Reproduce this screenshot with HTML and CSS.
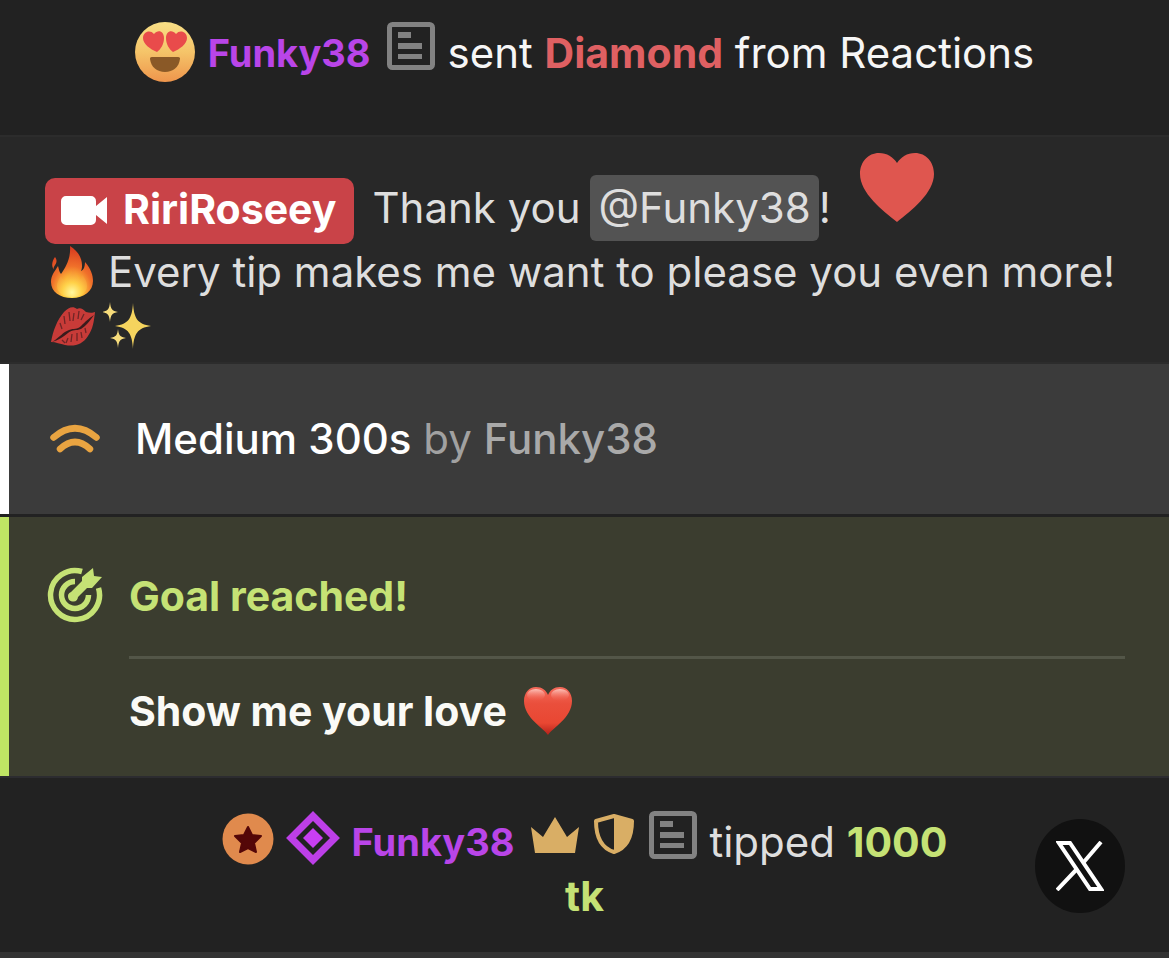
FILE: index.html
```html
<!DOCTYPE html>
<html lang="en">
<head>
<meta charset="utf-8">
<meta name="viewport" content="width=device-width, initial-scale=1">
<title>Chat</title>
<link rel="stylesheet" href="styles.css">
</head>
<body>
<svg class="defs" width="0" height="0" aria-hidden="true">
  <defs>
    <linearGradient id="face" x1="0" y1="0" x2="0" y2="1"><stop offset="0" stop-color="#f8df86"/><stop offset=".5" stop-color="#f5c469"/><stop offset="1" stop-color="#ee954c"/></linearGradient>
    <radialGradient id="flame" cx=".5" cy=".88" r=".85"><stop offset="0" stop-color="#fff36a"/><stop offset=".28" stop-color="#ffc83c"/><stop offset=".58" stop-color="#f0702a"/><stop offset="1" stop-color="#d93a20"/></radialGradient>
    <radialGradient id="core" cx=".5" cy=".85" r=".8"><stop offset="0" stop-color="#fff9a0"/><stop offset=".4" stop-color="#ffd148"/><stop offset="1" stop-color="#f27a2c"/></radialGradient>
    <linearGradient id="love" x1="0" y1="0" x2="0" y2="1"><stop offset="0" stop-color="#f46a5a"/><stop offset=".35" stop-color="#ea4f3c"/><stop offset=".75" stop-color="#e94732"/><stop offset="1" stop-color="#b3211a"/></linearGradient>
    <linearGradient id="shine" x1="0" y1="0" x2="0" y2="1"><stop offset="0" stop-color="#ffd9d2" stop-opacity=".8"/><stop offset="1" stop-color="#f46a5a" stop-opacity="0"/></linearGradient>
    <symbol id="note" viewBox="0 0 48 48"><rect x="2.5" y="2.5" width="43" height="43" rx="3" fill="none" stroke="#828282" stroke-width="5"/><path d="M11 10h13v6H11zM11 21h24v6H11zM11 32h24v5H11z" fill="#828282"/></symbol>
  </defs>
</svg>
<main class="chat">
  <article class="message message-center reaction">
    <div class="line line-top">
      <svg class="emoji-face" viewBox="0 0 60 60" role="img" aria-label="Heart eyes">
        <circle cx="30" cy="30" r="30" fill="url(#face)"/>
        <path d="M22 30C15 27 8 22 8 16c0-6 7-9 11-4 4-5 10-3 10 4 0 6-3 11-7 14z" fill="#e94b4b"/>
        <path d="M38 30c7-3 14-8 14-14 0-6-7-9-11-4-4-5-10-3-10 4 0 6 3 11 7 14z" fill="#e94b4b"/>
        <path d="M17 35h26c2 0 2 1 2 2-1 8-7 13-15 13s-14-5-15-13c0-1 0-2 2-2z" fill="#8a5927"/>
      </svg>
      <span class="user">Funky38</span>
      <svg class="note" aria-hidden="true"><use href="#note"/></svg>
      <span class="light">sent <b class="gift">Diamond</b> from Reactions</span>
    </div>
  </article>

  <article class="message host">
    <div class="line line-host">
      <span class="badge">
        <svg class="camera" viewBox="0 0 46 30" aria-hidden="true"><path d="M5 0h25a5 5 0 0 1 5 5v5l11-9v27l-11-9v5a5 5 0 0 1-5 5H5a5 5 0 0 1-5-5V5a5 5 0 0 1 5-5z" fill="#fff"/></svg>
        RiriRoseey
      </span>
      <span class="said thanks">Thank you</span>
      <span class="said mention">@Funky38</span><span class="said">!</span>
      <svg class="heart-flat" viewBox="0 0 76 70" role="img" aria-label="Heart"><path d="M38 70C24 59 1 41 1 22 1 10 9 1 20 1c8 0 14 4 18 10C42 5 48 1 56 1c11 0 19 9 19 21 0 19-23 37-37 48z" fill="#df564f"/></svg>
    </div>
    <div class="line line-text">
      <svg class="fire" viewBox="0 0 44 52" role="img" aria-label="Fire">
        <path d="M20 0c8 5 12 12 12 19 0 2 0 4-1 6 3-1 4-5 4-9 6 7 8 13 8 19 0 10-9 17-21 17S1 46 1 36c0-7 4-11 7-16 1 3 1 6 3 8 5-7 10-16 9-28zM5 11c2 3 2 5 0 8-1 2-2 3-1 5-3-4-2-9 1-13z" fill="url(#flame)"/>
        <path d="M23 20c0 7 4 10 6 14 2-1 3-3 3-5 4 4 5 8 5 11 0 7-7 11-15 11S7 47 7 40c0-4 2-7 4-10 1 2 2 4 4 5 5-4 8-9 8-15z" fill="url(#core)"/>
      </svg>
      <span>Every tip makes me want to please you even more!</span>
    </div>
    <div class="line line-emoji">
      <svg class="kiss" viewBox="0 0 46 42" role="img" aria-label="Kiss mark">
        <path d="M1 37C3 26 7 15 14 7c5-5 9-6 13-3 3-2 6 0 9 3 3 1 7 1 9 0-1 9-2 17-7 24-5 8-13 11-23 9-5-1-9-3-14-3z" fill="#c83b38"/>
        <path d="M2 37c8-5 11-10 17-12 5-2 8 0 12-4 4-4 7-7 13-11-5 7-8 11-13 14-5 2-8 0-13 4-4 3-9 7-16 9z" fill="#3a1b1c"/>
        <path d="M14 11l1 8M19 7l1 9M24 8l-1 8M29 6l-1 8M34 9l-3 6M10 18l2 6M18 33l-2 5M22 29l-1 8M27 28l0 8M31 27l1 6M35 23l1 5M12 35l3 3" stroke="#702526" stroke-width="1.3" fill="none"/>
      </svg>
      <svg class="sparkles" viewBox="0 0 48 48" role="img" aria-label="Sparkles">
        <path d="M30 1c1 15 4 21 18 23-14 2-17 8-18 23-1-15-4-21-18-23C26 22 29 16 30 1z" fill="#f5d45e"/>
        <path d="M7 0c.7 7 2 9 8 10-6 1-7.300 3-8 10-.7-7-2-9-8-10 6-1 7.300-3 8-10zM15 27c.6 6 2 8 8 9-6 1-7.400 3-8 10-.6-7-2-9-8-10 6-1 7.400-3 8-9z" fill="#f7dc7b"/>
      </svg>
    </div>
  </article>

  <article class="message notice toy">
    <svg class="waves" viewBox="0 0 50 30" fill="none" stroke="#e9a441" stroke-width="6.500" stroke-linecap="round" aria-hidden="true"><path d="M3.500 13.500Q25-5 46.500 13.500M10 25Q25 11 40 25"/></svg>
    <span><span class="level">Medium 300s</span> by <span class="by">Funky38</span></span>
  </article>

  <article class="message notice goal">
    <svg class="target" viewBox="0 0 56 56" aria-hidden="true">
      <g fill="none" stroke="#c5e275" stroke-width="5.500"><path d="M35 4.500A24.500 24.500 0 1 0 51.500 21"/><path d="M28 14.500A13.500 13.500 0 1 0 41.500 28"/></g>
      <path d="M24 25l11-11v-4l11-9 1 8 8 1-10 11h-5L31 30a5 5 0 1 1-7-5z" fill="#c5e275"/>
    </svg>
    <div class="goal-body">
      <h2 class="goal-title">Goal reached!</h2>
      <p class="goal-text">Show me your love
        <svg class="heart-red" viewBox="0 0 50 50" role="img" aria-label="Red heart"><path d="M25 49C21 42 1 32 1 15 1 7 6 1 13 1c6 0 10 3 12 8 2-5 6-8 12-8 7 0 12 6 12 14 0 17-20 27-24 34z" fill="url(#love)"/><ellipse cx="13" cy="9" rx="9" ry="6" fill="url(#shine)"/><ellipse cx="37" cy="9" rx="9" ry="6" fill="url(#shine)"/></svg>
      </p>
    </div>
  </article>

  <article class="message message-center tip">
    <div class="line line-tip">
      <svg class="medal" viewBox="0 0 52 52" aria-hidden="true"><circle cx="26" cy="26" r="25.500" fill="#e08a4d"/><path d="M26 14l4 8 9 1-7 7 2 9-8-4-8 4 2-9-7-7 9-1z" fill="#540708" stroke="#540708" stroke-width="2" stroke-linejoin="round"/></svg>
      <svg class="diamond" viewBox="0 0 54 54" aria-hidden="true"><path d="M27 5l22 22-22 22L5 27z" fill="none" stroke="#bd3fe8" stroke-width="7"/><path d="M27 17l10 10-10 10-10-10z" fill="#c93ff2"/></svg>
      <span class="user">Funky38</span>
      <svg class="crown" viewBox="0 0 48 36" aria-hidden="true"><path d="M0 10l12 10L24 0l12 20 12-10-4 26H4z" fill="#d9ae65"/></svg>
      <svg class="shield" viewBox="0 0 40 40" aria-hidden="true"><path d="M20 2L38 7c0 16-5 27-18 31C7 34 2 23 2 7z" fill="none" stroke="#d9ae65" stroke-width="4" stroke-linejoin="round"/><path d="M20 2l18 5c0 16-5 27-18 31z" fill="#d9ae65"/></svg>
      <svg class="note" aria-hidden="true"><use href="#note"/></svg>
      <span>tipped <b class="amount">1000</b></span>
    </div>
    <b class="amount unit">tk</b>
    <a class="share" href="#x" aria-label="X">
      <svg viewBox="0 0 48 50" fill="none" stroke="#fff" aria-hidden="true"><path d="M3 2h11l31 46H34z" stroke-width="4"/><path d="M45 1L27 22M21 28L1 49" stroke-width="4"/></svg>
    </a>
  </article>
</main>
</body>
</html>
```
FILE: styles.css
```css
* { box-sizing: border-box; }
body { margin: 0; background: #222; color: #dedede; font: 400 42px/54px Inter, "Liberation Sans", sans-serif; }
svg { display: block; flex: none; }
h2, p { margin: 0; font: inherit; }
b, .badge, .goal-title, .goal-text { font-size: 41px; font-weight: 700; }
.defs { position: absolute; }
.message { position: relative; border-bottom: 2px solid #2c2c2c; }
.message-center { display: flex; flex-direction: column; align-items: center; }
.line { display: flex; align-items: center; white-space: nowrap; }
.user { padding-right: 3px; color: #b945e8; font-size: 38px; font-weight: 700; }
.light { color: #f6f6f6; }
.gift { color: #df6062; }
.note { width: 48px; height: 48px; }

.reaction { padding: 22px 0 51px; }
.line-top { gap: 13px; line-height: 62px; align-items: flex-start; }
.emoji-face { width: 60px; height: 60px; }

.host { padding: 15px 45px 9px; background: #282828; }
.line-host { align-items: flex-end; line-height: 66px; padding-bottom: 1px; }
.badge { display: flex; align-items: center; gap: 16px; padding: 0 18px 4px 16px; border-radius: 10px; background: #c94348; color: #fff; line-height: 62px; }
.camera { width: 46px; height: 30px; margin-top: 4px; }
.said { margin-bottom: 3px; }
.thanks { margin-left: 18px; margin-right: 10px; }
.mention { padding: 0 8px; border-radius: 6px; background: #535353; }
.heart-flat { width: 76px; height: 70px; margin: 0 0 22px 28px; }
.line-text { gap: 14px; padding-left: 5px; }
.fire { width: 44px; height: 52px; }
.line-emoji { gap: 7px; padding-left: 5px; min-height: 54px; }
.kiss { width: 46px; height: 42px; }
.sparkles { width: 48px; height: 48px; }

.notice { display: flex; border-left: 9px solid #fff; }
.toy { align-items: center; gap: 35px; padding: 48px 41px; background: #3b3b3b; color: #a1a1a1; border-bottom: 0; }
.waves { width: 50px; height: 30px; }
.level { color: #fff; font-weight: 500; }
.by { font-weight: 500; color: #a9a9a9; }

.goal { gap: 26px; margin-top: 3px; padding: 50px 44px 38px 38px; border-left-color: #bfe564; border-bottom: 0; background: #3b3d2f; }
.target { width: 56px; height: 56px; }
.goal-body { flex: 1; }
.goal-title { padding: 2px 0 33px; border-bottom: 3px solid #535648; color: #c5e275; }
.goal-text { display: flex; align-items: center; gap: 16px; padding-top: 25px; color: #fafaf6; }
.heart-red { width: 50px; height: 50px; }

.tip { padding: 33px 0; border-top: 2px solid #2c2c30; border-bottom: 6px solid #333; }
.line-tip { gap: 12px; align-items: flex-start; line-height: 62px; }
.medal { width: 52px; height: 52px; margin-top: 2px; }
.diamond { width: 54px; height: 54px; }
.crown { width: 48px; height: 36px; margin: 6px 3px 0 2px; }
.shield { width: 40px; height: 40px; margin: 3px 3px 0 0; }
.amount { color: #c5e275; }
.unit { line-height: 46px; }
.share { position: absolute; right: 44px; top: 41px; width: 90px; height: 94px; display: grid; place-items: center; border-radius: 50%; background: #111; }
.share svg { width: 48px; height: 50px; }
```
